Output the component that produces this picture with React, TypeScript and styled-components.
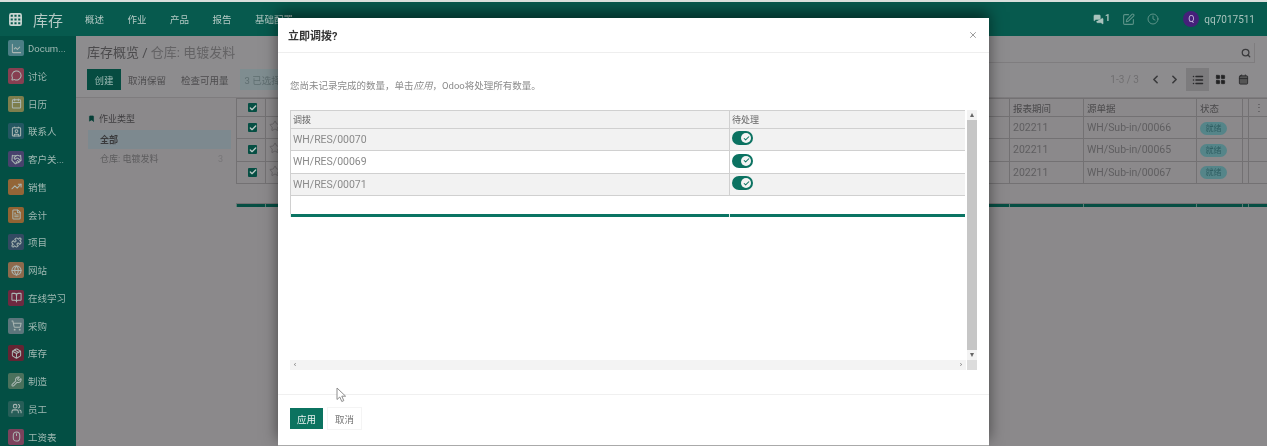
import styled, { createGlobalStyle } from 'styled-components';
import {
  Bookmark,
  BookOpen,
  Calendar,
  Check,
  ChevronLeft,
  ChevronRight,
  Clock,
  Contact,
  FileText,
  Globe,
  Grid3x3,
  Handshake,
  LayoutGrid,
  LineChart,
  List,
  MessageCircle,
  MessagesSquare,
  Mouse,
  Package,
  PenSquare,
  Puzzle,
  Search,
  ShoppingCart,
  Star,
  TrendingUp,
  Users,
  Wrench,
  X,
} from 'lucide-react';

const APPS = [
  { name: 'Docum...', color: '#5d8a96', Icon: LineChart },
  { name: '讨论', color: '#a83c55', Icon: MessageCircle },
  { name: '日历', color: '#9c8a50', Icon: Calendar },
  { name: '联系人', color: '#2d5a6a', Icon: Contact },
  { name: '客户关...', color: '#5a3f78', Icon: Handshake },
  { name: '销售', color: '#b86b34', Icon: TrendingUp },
  { name: '会计', color: '#b5692f', Icon: FileText },
  { name: '项目', color: '#3f4a6a', Icon: Puzzle },
  { name: '网站', color: '#b0714f', Icon: Globe },
  { name: '在线学习', color: '#8a2040', Icon: BookOpen },
  { name: '采购', color: '#73808a', Icon: ShoppingCart },
  { name: '库存', color: '#7d1a30', Icon: Package },
  { name: '制造', color: '#5e7a62', Icon: Wrench },
  { name: '员工', color: '#30625e', Icon: Users },
  { name: '工资表', color: '#9b3f63', Icon: Mouse },
];

const MENU = ['概述', '作业', '产品', '报告', '基础配置'];

const BACK_ROWS = [
  { period: '202211', source: 'WH/Sub-in/00066' },
  { period: '202211', source: 'WH/Sub-in/00065' },
  { period: '202211', source: 'WH/Sub-in/00067' },
];

const TRANSFERS = ['WH/RES/00070', 'WH/RES/00069', 'WH/RES/00071'];

function App() {
  return (
    <Page>
      <GlobalStyle />
      <TopBar>
        <AppsButton>
          <Grid3x3 size={15} strokeWidth={2.6} />
        </AppsButton>
        <Brand>库存</Brand>
        <Menu>
          {MENU.map((item) => (
            <MenuItem key={item}>{item}</MenuItem>
          ))}
        </Menu>
        <Systray>
          <ChatIcon>
            <MessagesSquare size={11} fill="#a9c3bd" strokeWidth={1} />
            <sup>1</sup>
          </ChatIcon>
          <PenSquare size={13} />
          <Clock size={12} />
          <Avatar>Q</Avatar>
          <UserName>qq7017511</UserName>
        </Systray>
      </TopBar>

      <Body>
        <Sidebar>
          {APPS.map(({ name, color, Icon }) => (
            <SideItem key={name}>
              <SideIcon $color={color}>
                <Icon size={11} strokeWidth={2.2} />
              </SideIcon>
              <SideLabel>{name}</SideLabel>
            </SideItem>
          ))}
        </Sidebar>

        <Main>
          <ControlPanel>
            <PanelRow>
              <Breadcrumb>
                <b>库存概览 /</b> 仓库: 电镀发料
              </Breadcrumb>
              <SearchBox>
                <Search size={10} strokeWidth={3} />
              </SearchBox>
            </PanelRow>
            <PanelRow>
              <Actions>
                <PrimaryAction>创建</PrimaryAction>
                <GhostAction>取消保留</GhostAction>
                <GhostAction>检查可用量</GhostAction>
                <SelectedInfo>3 已选择</SelectedInfo>
              </Actions>
              <Pager>
                <PagerText>1-3 / 3</PagerText>
                <ChevronLeft size={13} strokeWidth={3} />
                <ChevronRight size={13} strokeWidth={3} />
                <ViewSwitch>
                  <ViewButton $active>
                    <List size={12} strokeWidth={3} />
                  </ViewButton>
                  <ViewButton>
                    <LayoutGrid size={11} fill="#222" />
                  </ViewButton>
                  <ViewButton>
                    <Calendar size={11} fill="#555" />
                  </ViewButton>
                </ViewSwitch>
              </Pager>
            </PanelRow>
          </ControlPanel>

          <Content>
            <FilterPanel>
              <FilterTitle>
                <Bookmark size={7} fill="#063f37" color="#063f37" />
                作业类型
              </FilterTitle>
              <FilterItem $active>全部</FilterItem>
              <FilterItem>
                仓库: 电镀发料
                <FilterCount>3</FilterCount>
              </FilterItem>
            </FilterPanel>

            <BackTable>
              <colgroup>
                <col width={29} />
                <col width={744} />
                <col width={74} />
                <col width={113} />
                <col width={46} />
                <col width={6} />
                <col width={19} />
              </colgroup>
              <thead>
                <tr>
                  <th>
                    <CheckBox>
                      <Check size={8} strokeWidth={4} />
                    </CheckBox>
                  </th>
                  <th />
                  <th>报表期间</th>
                  <th>源单据</th>
                  <th>状态</th>
                  <th />
                  <th>⋮</th>
                </tr>
              </thead>
              <tbody>
                {BACK_ROWS.map((row) => (
                  <tr key={row.source}>
                    <td>
                      <CheckBox>
                        <Check size={8} strokeWidth={4} />
                      </CheckBox>
                    </td>
                    <td>
                      <Star size={12} color="#6c6a6c" />
                    </td>
                    <td>{row.period}</td>
                    <td>{row.source}</td>
                    <td>
                      <StatusPill>就绪</StatusPill>
                    </td>
                    <td />
                    <td />
                  </tr>
                ))}
                <tr>
                  <td colSpan={7} />
                </tr>
              </tbody>
              <tfoot>
                <tr>
                  <td />
                  <td />
                  <td />
                  <td />
                  <td />
                  <td />
                  <td />
                </tr>
              </tfoot>
            </BackTable>
          </Content>
        </Main>
      </Body>

      <Dialog>
        <DialogHeader>
          <DialogTitle>立即调拨?</DialogTitle>
          <X size={10} color="#888" />
        </DialogHeader>
        <DialogBody>
          <Notice>
            您尚未记录完成的数量，单击<em>应用</em>，Odoo将处理所有数量。
          </Notice>
          <ListFrame>
            <ListArea>
              <DialogTable>
                <colgroup>
                  <col width={439} />
                  <col />
                </colgroup>
                <thead>
                  <tr>
                    <th>调拨</th>
                    <th>待处理</th>
                  </tr>
                </thead>
                <tbody>
                  {TRANSFERS.map((name) => (
                    <tr key={name}>
                      <td>{name}</td>
                      <td>
                        <Toggle>
                          <Knob>
                            <Check size={7} strokeWidth={3.5} />
                          </Knob>
                        </Toggle>
                      </td>
                    </tr>
                  ))}
                  <tr>
                    <td colSpan={2} />
                  </tr>
                </tbody>
                <tfoot>
                  <tr>
                    <td />
                    <td />
                  </tr>
                </tfoot>
              </DialogTable>
            </ListArea>
            <VerticalBar>
              <Arrow>▴</Arrow>
              <Thumb />
              <Arrow>▾</Arrow>
            </VerticalBar>
            <HorizontalBar>
              <Arrow>‹</Arrow>
              <Arrow>›</Arrow>
            </HorizontalBar>
            <BarCorner />
          </ListFrame>
        </DialogBody>
        <DialogFooter>
          <ApplyButton>应用</ApplyButton>
          <CancelButton>取消</CancelButton>
        </DialogFooter>
      </Dialog>

      <Pointer>
        <svg width="11" height="16" viewBox="0 0 11 16">
          <path
            d="M1 1v11.5l2.8-2.5 2 4.5 2-.9-2-4.4h3.8z"
            fill="#fff"
            stroke="#8d8d8d"
            strokeWidth="1"
            strokeLinejoin="round"
          />
        </svg>
      </Pointer>
    </Page>
  );
}

export default App;

const GlobalStyle = createGlobalStyle`
  html, body {
    margin: 0;
    padding: 0;
    background: #8b898b;
  }
`;

const Page = styled.div`
  position: relative;
  display: flex;
  flex-direction: column;
  width: 1267px;
  height: 446px;
  overflow: hidden;
  border-top: 2px solid #d9dfdc;
  box-sizing: border-box;
  background: #8b898b;
  font-family: 'Roboto', 'Noto Sans CJK SC', sans-serif;
  filter: blur(0.6px);
`;

const TopBar = styled.header`
  display: flex;
  align-items: center;
  flex: 0 0 34px;
  padding: 0 12px 0 8px;
  background: #075a4e;
  color: #a9c3bd;
`;

const AppsButton = styled.div`
  display: flex;
  width: 15px;
  color: #c9d6d2;
`;

const Brand = styled.div`
  margin-left: 10px;
  font-size: 15px;
  color: #b4c9c4;
`;

const Menu = styled.nav`
  display: flex;
  gap: 23.5px;
  margin-left: 22px;
`;

const MenuItem = styled.span`
  font-size: 9.5px;
  color: #b4c9c4;
`;

const Systray = styled.div`
  display: flex;
  align-items: center;
  gap: 12px;
  margin-left: auto;
  color: #5d9388;
`;

const ChatIcon = styled.span`
  display: flex;
  align-items: flex-start;
  color: #a9c3bd;

  sup {
    font-size: 9px;
    font-weight: 700;
    line-height: 9px;
    margin-left: 1px;
  }
`;

const Avatar = styled.span`
  display: flex;
  align-items: center;
  justify-content: center;
  width: 16px;
  height: 16px;
  margin-left: 12px;
  border-radius: 50%;
  background: #45207a;
  color: #c9bde0;
  font-size: 9px;
`;

const UserName = styled.span`
  margin-left: -7px;
  font-size: 10px;
  color: #a9c3bd;
`;

const Body = styled.div`
  display: flex;
  flex: 1;
  min-height: 0;
`;

const Sidebar = styled.aside`
  display: flex;
  flex-direction: column;
  flex: 0 0 76px;
  gap: 3.75px;
  padding: 0 0 0 8px;
  box-sizing: border-box;
  background: #034f44;
`;

const SideItem = styled.div`
  display: flex;
  align-items: center;
  flex: 0 0 24px;
  gap: 4px;
`;

const SideIcon = styled.span<{ $color: string }>`
  display: flex;
  align-items: center;
  justify-content: center;
  width: 16px;
  height: 16px;
  border-radius: 2px;
  background: ${(props) => props.$color};
  color: #d5d2d0;
  opacity: 0.8;
`;

const SideLabel = styled.span`
  font-size: 9.5px;
  white-space: nowrap;
  color: #9fb8b2;
`;

const Main = styled.main`
  display: flex;
  flex-direction: column;
  flex: 1;
  min-width: 0;
`;

const ControlPanel = styled.section`
  display: flex;
  flex-direction: column;
  flex: 0 0 62px;
  box-sizing: border-box;
  gap: 5px;
  padding: 7px 12px 0 11px;
  background: #8d8c8e;
  border-bottom: 1px solid #7e7c7e;
`;

const PanelRow = styled.div`
  display: flex;
  align-items: center;
  justify-content: space-between;
`;

const Breadcrumb = styled.div`
  font-size: 13px;
  line-height: 20px;
  color: #646365;

  b {
    font-weight: 400;
    color: #4b4a4c;
  }
`;

const SearchBox = styled.div`
  display: flex;
  align-items: center;
  justify-content: flex-end;
  width: 400px;
  height: 20px;
  padding-right: 3px;
  box-sizing: border-box;
  border: 1px solid #7f7d7f;
  border-width: 0 1px 1px 0;
  color: #3a3a3c;
`;

const Actions = styled.div`
  display: flex;
  align-items: center;
  gap: 7px;
`;

const PrimaryAction = styled.div`
  display: flex;
  align-items: center;
  justify-content: center;
  width: 34px;
  height: 21px;
  background: #064c41;
  color: #9fbcb6;
  font-size: 9.5px;
`;

const GhostAction = styled.div`
  display: flex;
  align-items: center;
  height: 21px;
  margin-right: 8px;
  font-size: 9.5px;
  color: #4d4c4e;
`;

const SelectedInfo = styled.div`
  display: flex;
  align-items: center;
  width: 60px;
  height: 21px;
  margin-left: -4px;
  padding-left: 5px;
  box-sizing: border-box;
  background: #7f8d90;
  font-size: 9.5px;
  color: #5f6e70;
`;

const Pager = styled.div`
  display: flex;
  align-items: center;
  gap: 6px;
  color: #3a3a3c;
`;

const PagerText = styled.span`
  margin-right: 4px;
  font-size: 10px;
  color: #706f71;
`;

const ViewSwitch = styled.div`
  display: flex;
  margin-left: -1px;
`;

const ViewButton = styled.span<{ $active?: boolean }>`
  display: flex;
  align-items: center;
  justify-content: center;
  width: 23px;
  height: 23px;
  background: ${(props) => (props.$active ? '#7c7b7d' : 'transparent')};
  color: #2b2b2d;
`;

const Content = styled.div`
  display: flex;
  flex: 1;
  min-height: 0;
`;

const FilterPanel = styled.aside`
  flex: 0 0 160px;
  box-sizing: border-box;
  padding: 13px 5px 0 12px;
  color: #565557;
  font-size: 9px;
`;

const FilterTitle = styled.div`
  display: flex;
  align-items: center;
  gap: 4px;
  height: 14px;
  margin-bottom: 5px;
  color: #3f3e40;
`;

const FilterItem = styled.div<{ $active?: boolean }>`
  display: flex;
  justify-content: space-between;
  align-items: center;
  height: 19px;
  padding: 0 8px 0 12px;
  background: ${(props) => (props.$active ? '#7d898f' : 'transparent')};
  font-weight: ${(props) => (props.$active ? 700 : 400)};
  color: ${(props) => (props.$active ? '#3a3a3c' : '#5d5c5e')};
`;

const FilterCount = styled.span`
  color: #777678;
`;

const BackTable = styled.table`
  flex: 0 0 1031px;
  width: 1031px;
  height: 109px;
  table-layout: fixed;
  border-collapse: collapse;
  font-size: 10.5px;
  color: #5f5e60;

  th,
  td {
    padding: 0 3px;
    border: 1px solid #737173;
    font-weight: 400;
    text-align: left;
    overflow: hidden;
    white-space: nowrap;
  }

  th {
    height: 17px;
    font-size: 9.5px;
    color: #4a494b;
  }

  th:last-child {
    text-align: right;
  }

  tbody td {
    height: 21px;
  }

  th:first-child,
  tbody td:first-child {
    padding-left: 11px;
  }

  tbody tr:last-child td {
    height: 19px;
    border-left: 0;
    border-right: 0;
  }

  tfoot td {
    height: 3px;
    padding: 0;
    background: #064e43;
    border-color: #5c7d76;
    border-width: 0 1px;
  }
`;

const CheckBox = styled.span`
  display: flex;
  align-items: center;
  justify-content: center;
  width: 9px;
  height: 9px;
  border-radius: 1px;
  background: #064e43;
  color: #b9c9c5;
`;

const StatusPill = styled.span`
  display: inline-block;
  width: 27px;
  border-radius: 7px;
  background: #558589;
  font-size: 8px;
  line-height: 13px;
  text-align: center;
  color: #2f5f63;
`;

const Dialog = styled.div`
  position: absolute;
  left: 278px;
  top: 16px;
  display: flex;
  flex-direction: column;
  width: 711px;
  height: 428px;
  background: #fff;
  border-bottom: 1px solid #aaa;
  box-sizing: border-box;
  box-shadow: 0 -6px 14px rgba(0, 0, 0, 0.5);
`;

const DialogHeader = styled.header`
  display: flex;
  align-items: center;
  justify-content: space-between;
  flex: 0 0 35px;
  box-sizing: border-box;
  padding: 0 11px 0 10px;
  border-bottom: 1px solid #eee;
`;

const DialogTitle = styled.h4`
  margin: 0;
  font-size: 11px;
  font-weight: 700;
  color: #333;
`;

const DialogBody = styled.div`
  flex: 1;
  min-height: 0;
  padding: 26px 12px 0;
`;

const Notice = styled.p`
  margin: 0 0 17px;
  font-size: 9.5px;
  line-height: 14px;
  color: #8a8a8a;
`;

const ListFrame = styled.div`
  display: grid;
  grid-template-columns: 676px 11px;
  grid-template-rows: 250px 10px;
`;

const ListArea = styled.div`
  min-width: 0;
`;

const DialogTable = styled.table`
  width: 675px;
  table-layout: fixed;
  border-collapse: collapse;
  font-size: 10.5px;
  color: #8a8a8a;

  th,
  td {
    padding: 0 2px;
    border: 1px solid #d0d0d0;
    border-width: 1px 0 1px 1px;
    text-align: left;
    font-weight: 400;
  }

  th {
    height: 16.5px;
    background: #f1f1f1;
    font-size: 9px;
    color: #666;
  }

  tbody td {
    height: 21.5px;
  }

  tbody tr:nth-child(odd) td {
    background: #f2f2f2;
  }

  tbody tr:last-child td {
    height: 18px;
    background: #fff;
    border-bottom: 0;
  }

  tfoot td {
    height: 3px;
    padding: 0;
    background: #0a7463;
    border: 0;
    border-left: 1px solid #dceee9;
  }
`;

const Toggle = styled.span`
  display: flex;
  align-items: center;
  justify-content: flex-end;
  width: 21px;
  height: 14px;
  margin: -2px 0 0;
  padding-right: 2px;
  box-sizing: border-box;
  border-radius: 7px;
  background: #0b7261;
`;

const Knob = styled.span`
  display: flex;
  align-items: center;
  justify-content: center;
  width: 10px;
  height: 10px;
  border-radius: 50%;
  background: #f4f4f4;
  color: #0b7261;
`;

const VerticalBar = styled.div`
  display: flex;
  flex-direction: column;
  margin-left: 1px;
  background: #f3f3f3;
`;

const Arrow = styled.span`
  flex: 0 0 10px;
  width: 10px;
  font-size: 8px;
  line-height: 10px;
  text-align: center;
  color: #666;
`;

const Thumb = styled.div`
  flex: 1;
  background: #c6c6c6;
`;

const HorizontalBar = styled.div`
  display: flex;
  justify-content: space-between;
  background: #f3f3f3;
`;

const BarCorner = styled.div`
  margin-left: 1px;
  background: #dcdcdc;
`;

const DialogFooter = styled.footer`
  display: flex;
  align-items: flex-start;
  flex: 0 0 51px;
  box-sizing: border-box;
  gap: 5px;
  padding: 13px 12px 0;
  border-top: 1px solid #f0f0f0;
`;

const ApplyButton = styled.div`
  display: flex;
  align-items: center;
  justify-content: center;
  width: 33px;
  height: 21px;
  background: #0b7360;
  color: #e9f3f1;
  font-size: 9.5px;
`;

const CancelButton = styled(ApplyButton)`
  background: #fff;
  color: #777;
  box-shadow: 0 0 0 1px #f4f4f4;
`;

const Pointer = styled.div`
  position: absolute;
  left: 336px;
  top: 385px;
  display: flex;
`;
